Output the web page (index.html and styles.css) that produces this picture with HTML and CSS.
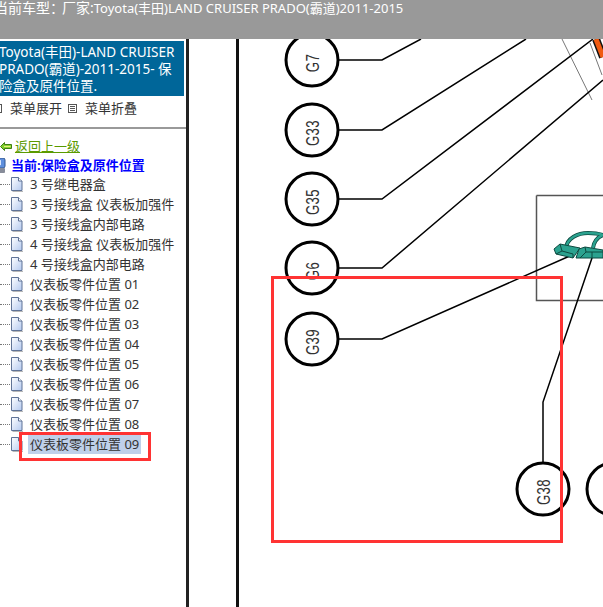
FILE: index.html
```html
<!DOCTYPE html>
<html lang="zh-CN">
<head>
<meta charset="utf-8">
<title>保险盒及原件位置</title>
<link rel="stylesheet" href="styles.css">
</head>
<body>
<svg width="0" height="0" class="defs">
  <defs>
    <linearGradient id="doc" x1="0" y1="0" x2="1" y2="1">
      <stop offset="0" stop-color="#ffffff"/>
      <stop offset="1" stop-color="#b3c9f0"/>
    </linearGradient>
    <symbol id="page" viewBox="0 0 13 15">
      <path d="M1.500 .5H8.500L12 4V13.500H1.500Z" fill="url(#doc)" stroke="#5f7396"/>
      <path d="M8.500 .5V4H12" fill="#fff" stroke="#5f7396"/>
      <path d="M2.500 14.500H13" stroke="#b8b8b8"/>
    </symbol>
  </defs>
</svg>
<header class="topbar"><span class="topbar-text"><span class="topbar-lead"><span class="topbar-colon">当前车型：</span>厂家:</span>Toyota(丰田)LAND CRUISER PRADO(霸道)2011-2015</span></header>
<div class="layout">
  <aside class="side">
    <div class="title">Toyota(丰田)-LAND CRUISER PRADO(霸道)-2011-2015- 保险盒及原件位置.</div>
    <div class="tools">
      <span class="tool"><i class="box"></i>菜单展开</span>
      <span class="tool"><i class="box"></i>菜单折叠</span>
    </div>
    <nav class="tree">
      <a class="back"><svg class="arrow" viewBox="0 0 12 9"><path d="M.5 4.500L4.500 .5V2.500H11.500V6.500H4.500V8.500Z" fill="#7fd02c" stroke="#3f7f10"/><path d="M4 4.500H10.500" stroke="#e6f27a" stroke-width="1.200"/></svg><span>返回上一级</span></a>
      <div class="current"><svg class="pc" viewBox="0 0 9 15"><rect x="0" y="0" width="8" height="10" rx="2" fill="#5f8fdc" stroke="#31568f"/><path d="M2 2.500L4 2V7L2 7.500Z" fill="#dce9fb"/><rect x="0" y="10" width="8" height="5" rx="1" fill="#878c99"/></svg><span>当前:保险盒及原件位置</span></div>
      <div class="row"><i class="dots"></i><svg class="doc"><use href="#page"/></svg><span class="label">3 号继电器盒</span></div>
      <div class="row"><i class="dots"></i><svg class="doc"><use href="#page"/></svg><span class="label">3 号接线盒 仪表板加强件</span></div>
      <div class="row"><i class="dots"></i><svg class="doc"><use href="#page"/></svg><span class="label">3 号接线盒内部电路</span></div>
      <div class="row"><i class="dots"></i><svg class="doc"><use href="#page"/></svg><span class="label">4 号接线盒 仪表板加强件</span></div>
      <div class="row"><i class="dots"></i><svg class="doc"><use href="#page"/></svg><span class="label">4 号接线盒内部电路</span></div>
      <div class="row"><i class="dots"></i><svg class="doc"><use href="#page"/></svg><span class="label">仪表板零件位置 01</span></div>
      <div class="row"><i class="dots"></i><svg class="doc"><use href="#page"/></svg><span class="label">仪表板零件位置 02</span></div>
      <div class="row"><i class="dots"></i><svg class="doc"><use href="#page"/></svg><span class="label">仪表板零件位置 03</span></div>
      <div class="row"><i class="dots"></i><svg class="doc"><use href="#page"/></svg><span class="label">仪表板零件位置 04</span></div>
      <div class="row"><i class="dots"></i><svg class="doc"><use href="#page"/></svg><span class="label">仪表板零件位置 05</span></div>
      <div class="row"><i class="dots"></i><svg class="doc"><use href="#page"/></svg><span class="label">仪表板零件位置 06</span></div>
      <div class="row"><i class="dots"></i><svg class="doc"><use href="#page"/></svg><span class="label">仪表板零件位置 07</span></div>
      <div class="row"><i class="dots"></i><svg class="doc"><use href="#page"/></svg><span class="label">仪表板零件位置 08</span></div>
      <div class="row"><i class="dots"></i><svg class="doc"><use href="#page"/></svg><span class="label selected">仪表板零件位置 09</span><i class="mark"></i></div>
    </nav>
  </aside>
  <main class="diagram">
    <svg class="drawing" viewBox="189 39 414 568" width="414" height="568">
      <path d="M237.500 39V607" class="frame"/>
      <path d="M536.500 195.500H603M536.500 195.500V300.500H603" class="box-line"/>
      <path d="M562 39L592 100M590 43L602 75" class="thin"/>
      <path d="M596 39L603 57" class="orange-edge"/>
      <path d="M596 39L603 57" class="orange"/>
      <g class="wires">
        <path d="M339 60H382L421 39"/>
        <path d="M339 130H382L526 39"/>
        <path d="M339 199H382L593 39"/>
        <path d="M339 268H382L603 80"/>
        <path d="M339 339H382L572 255"/>
        <path d="M543 462V402L593 255"/>
      </g>
      <path d="M566 248C567 238 578 233 588 233C594 233 600 234 603 235" class="arc-edge"/>
      <path d="M593 248C594 241 598 237 603 235" class="arc-edge"/>
      <path d="M566 248C567 238 578 233 588 233C594 233 600 234 603 235" class="arc"/>
      <path d="M593 248C594 241 598 237 603 235" class="arc"/>
      <path d="M554 249L560 244L580 248L573 258L556 254Z" class="conn-block"/>
      <path d="M579 249L585 247L603 250V258H576Z" class="conn-block"/>
      <path d="M560 244L562 251L573 254V258M562 251L556 254M585 247L586 252H603M586 252L580 258M592 252V258" class="conn-lines"/>
      <g class="circles">
        <circle cx="312" cy="60" r="26"/>
        <circle cx="312" cy="130" r="26"/>
        <circle cx="312" cy="199" r="26"/>
        <circle cx="312" cy="268" r="26"/>
        <circle cx="312" cy="339" r="26"/>
        <circle cx="543" cy="489" r="26"/>
        <circle cx="613" cy="489" r="26"/>
      </g>
      <g class="labels">
        <text transform="translate(319 63) rotate(-90) scale(.88 1.2)">G7</text>
        <text transform="translate(319 133) rotate(-90) scale(.88 1.2)">G33</text>
        <text transform="translate(319 202) rotate(-90) scale(.88 1.2)">G35</text>
        <text transform="translate(319 271) rotate(-90) scale(.88 1.2)">G6</text>
        <text transform="translate(319 342) rotate(-90) scale(.88 1.2)">G39</text>
        <text transform="translate(550 492) rotate(-90) scale(.88 1.2)">G38</text>
      </g>
    </svg>
    <div class="callout"></div>
  </main>
</div>
</body>
</html>
```
FILE: styles.css
```css
* { box-sizing: border-box; }
html, body { margin: 0; padding: 0; height: 100%; overflow: hidden; background: #fff; }
body {
  width: 603px;
  height: 607px;
  font-family: "Noto Sans", "Noto Sans CJK SC", sans-serif;
  font-size: 13px;
  color: #333;
}
.defs { position: absolute; }
.topbar {
  height: 39px;
  background: #999;
  color: #fff;
  font-size: 13px;
  line-height: 16px;
  white-space: nowrap;
  overflow: hidden;
}
.topbar-text { display: block; margin-left: -6px; }
.topbar-lead { font-size: 14px; }
.topbar-colon { margin-right: -2px; }
.layout { display: flex; height: 568px; }
.side {
  width: 189px;
  flex: none;
  border-right: 3px solid #222;
  overflow: hidden;
}
.title {
  margin: 2px 0 0 -1px;
  width: 185px;
  height: 55px;
  background: #069;
  color: #fff;
  font-size: 13.5px;
  line-height: 17px;
  padding: 3px 0 0 0;
}
.tools {
  height: 33px;
  border-bottom: 2px solid #999;
  display: flex;
  gap: 6px;
  align-items: flex-start;
  margin-left: -7px;
  padding-top: 3px;
  line-height: 18px;
}
.tool { display: flex; align-items: center; gap: 8px; }
.box {
  width: 9px;
  height: 9px;
  border: 1px solid #555;
  background: linear-gradient(#555, #555) center 1px / 5px 1px no-repeat, linear-gradient(#555, #555) center 3px / 5px 1px no-repeat, linear-gradient(#555, #555) center 5px / 5px 1px no-repeat, #fff;
}
.tree { padding-top: 7px; }
.back, .current { display: flex; align-items: center; height: 20px; line-height: 20px; }
.back { color: #5a9a00; text-decoration: underline; }
.arrow { width: 12px; height: 9px; margin-right: 3px; flex: none; }
.current { color: #00f; font-weight: 700; height: 18px; }
.pc { width: 9px; height: 15px; margin-left: -3px; margin-right: 5px; flex: none; }
.row { display: flex; align-items: center; height: 20px; position: relative; }
.dots { width: 10px; border-top: 1px dotted #777; flex: none; }
.doc { width: 13px; height: 15px; flex: none; }
.label { margin-left: 6px; padding: 0 1px; line-height: 19px; white-space: nowrap; }
.selected { background: #bfd0ea; margin-left: 5px; padding: 0 2px; }
.mark { position: absolute; left: 19px; top: -2px; width: 132px; height: 29px; border: 3px solid #f33; }
.diagram { position: relative; flex: 1; min-width: 0; overflow: hidden; }
.drawing { display: block; }
.frame { stroke: #111; stroke-width: 3; fill: none; }
.box-line { stroke: #555; stroke-width: 1.500; fill: none; }
.thin { stroke: #777; stroke-width: 1; fill: none; }
.orange-edge { stroke: #111; stroke-width: 8; }
.orange { stroke: #f05a10; stroke-width: 5; }
.wires path { fill: none; stroke: #000; stroke-width: 1.500; }
.arc-edge { fill: none; stroke: #0d4a40; stroke-width: 4; }
.arc { fill: none; stroke: #2ba28f; stroke-width: 2.500; }
.conn-block { fill: #2ba28f; stroke: #0d4a40; stroke-width: 1; }
.conn-lines { fill: none; stroke: #0d4a40; stroke-width: 1; }
.circles circle { fill: #fff; stroke: #000; stroke-width: 3; }
.labels text { font-family: "Liberation Sans", sans-serif; font-size: 15px; fill: #333; text-anchor: middle; letter-spacing: .5px; }
.callout { position: absolute; left: 82px; top: 237px; width: 292px; height: 267px; border: 3px solid #f33; }
```
